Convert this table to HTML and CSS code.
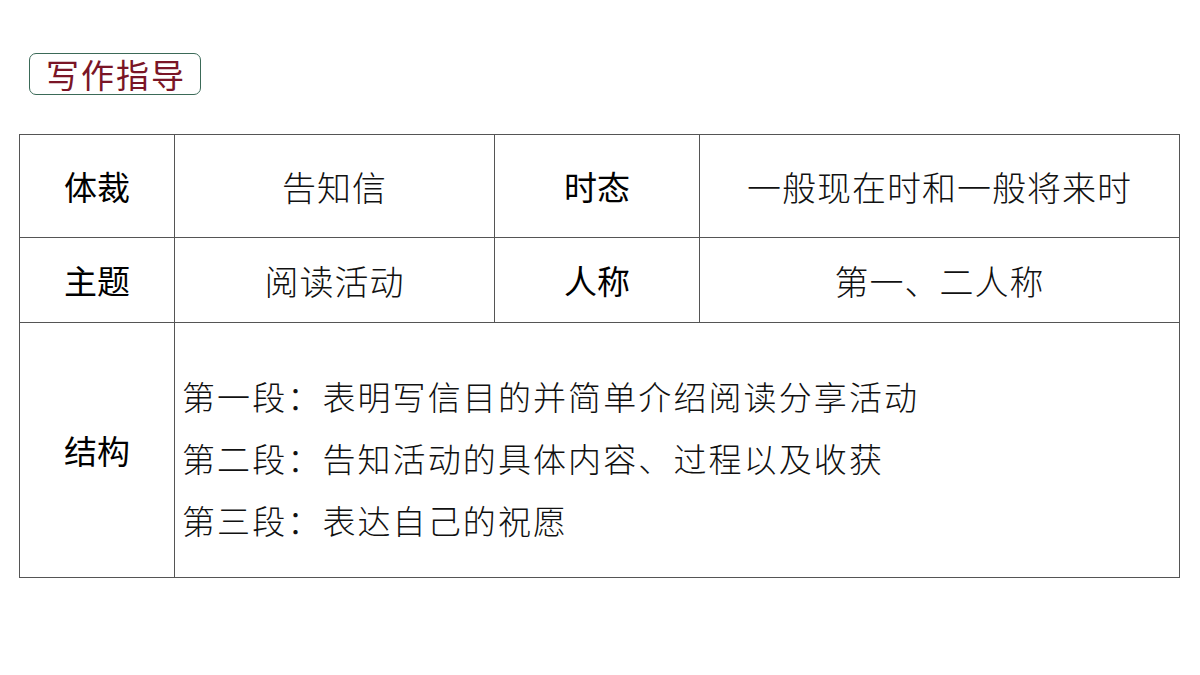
FILE: index.html
```html
<!DOCTYPE html>
<html lang="zh-CN">
<head>
<meta charset="utf-8">
<link rel="stylesheet" href="styles.css">
</head>
<body>
<div class="page">
  <div class="badge">写作指导</div>
  <table class="guide">
    <colgroup>
      <col class="c1"><col class="c2"><col class="c3"><col class="c4">
    </colgroup>
    <tr class="r1">
      <th>体裁</th><td>告知信</td><th>时态</th><td>一般现在时和一般将来时</td>
    </tr>
    <tr class="r2">
      <th>主题</th><td>阅读活动</td><th>人称</th><td>第一、二人称</td>
    </tr>
    <tr class="r3">
      <th>结构</th>
      <td colspan="3" class="struct">
        <div class="lines">
          <p>第一段：表明写信目的并简单介绍阅读分享活动</p>
          <p>第二段：告知活动的具体内容、过程以及收获</p>
          <p>第三段：表达自己的祝愿</p>
        </div>
      </td>
    </tr>
  </table>
</div>
</body>
</html>
```
FILE: styles.css
```css
html, body {
  margin: 0;
  padding: 0;
  background: #ffffff;
}
.page {
  width: 1200px;
  height: 675px;
  padding: 53px 0 0 19px;
  box-sizing: border-box;
  font-family: "Noto Sans CJK SC", "Noto Sans", sans-serif;
}
.badge {
  margin-left: 10px;
  width: 172px;
  height: 42px;
  box-sizing: border-box;
  border: 1.5px solid #3b6a58;
  border-radius: 7px;
  color: #7a1526;
  font-size: 33px;
  line-height: 40px;
  text-align: center;
  letter-spacing: 2px;
  padding-left: 2px;
}
.guide {
  margin-top: 39px;
  border-collapse: collapse;
  width: 1160px;
  table-layout: fixed;
  color: #111;
}
.c1 { width: 155px; }
.c2 { width: 320px; }
.c3 { width: 205px; }
.c4 { width: 480px; }
.guide th, .guide td {
  border: 1px solid #555;
  padding: 0;
  text-align: center;
  vertical-align: middle;
}
.guide th {
  font-weight: 400;
  font-size: 33px;
  color: #000;
}
.guide td {
  font-weight: 300;
  font-size: 34px;
  letter-spacing: 1px;
}
.r1 { height: 103px; }
.r2 { height: 85px; }
.r3 { height: 255px; }
.guide td.struct {
  text-align: left;
  vertical-align: top;
  letter-spacing: 0;
}
.lines {
  padding: 42px 0 0 7px;
}
.lines p {
  margin: 0;
  font-size: 33px;
  line-height: 62px;
  letter-spacing: 2.1px;
}
```
